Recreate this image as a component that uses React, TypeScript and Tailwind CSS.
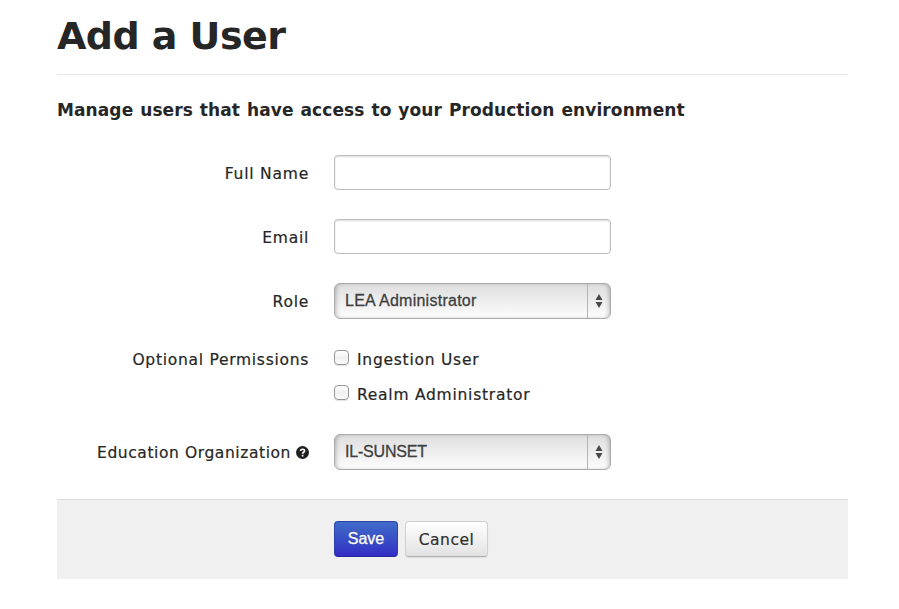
import type { ReactNode } from 'react';

const HELVETICA = "font-['Liberation_Sans',Arial,sans-serif]";

function Row({ label, className, labelClass, children }: { label: ReactNode; className: string; labelClass: string; children: ReactNode }) {
  return (
    <div className={`flex items-start ${className}`}>
      <div className={`flex w-[252px] shrink-0 items-center justify-end whitespace-nowrap leading-5 ${labelClass}`}>{label}</div>
      <div className="ml-[25px]">{children}</div>
    </div>
  );
}

function TextField({ name }: { name: string }) {
  return (
    <input
      aria-label={name}
      className="block h-[35px] w-[277px] rounded-[4px] border border-[#bdbdbd] bg-white px-2 shadow-[inset_0_1px_2px_rgba(0,0,0,0.14)] outline-none"
    />
  );
}

function SelectBox({ value, textClass }: { value: string; textClass: string }) {
  return (
    <button
      className={`flex h-9 w-[277px] overflow-hidden rounded-[6px] border border-[#aaaaaa] bg-linear-to-b from-[#dedede] to-[#fdfdfd] text-left text-[#3f3f3f] shadow-[inset_3px_0_4px_-2px_rgba(0,0,0,0.25),inset_-3px_0_4px_-2px_rgba(0,0,0,0.25)] ${HELVETICA}`}
    >
      <span className={`h-full flex-1 pl-[10px] text-base leading-[33px] [-webkit-text-stroke:0.3px_#3f3f3f] ${textClass}`}>{value}</span>
      <span className="flex h-full w-[23px] items-center justify-center border-l border-[#b5b5b5]">
        <svg width="8" height="14" viewBox="0 0 8 14" fill="#484848">
          <path d="M4 0 7.500 6H.500Z" />
          <path d="M.500 8h7L4 14Z" />
        </svg>
      </span>
    </button>
  );
}

function Check({ label }: { label: string }) {
  return (
    <label className="flex h-5 items-start whitespace-nowrap">
      <span className="mt-px h-[15px] w-[15px] shrink-0 rounded-[4px] border border-[#979797] bg-linear-to-b from-[#fefefe] via-[#f1f1f1] to-[#fafafa] shadow-[0_1px_1px_rgba(0,0,0,0.12)]" />
      <span className="mt-px ml-2 leading-5 tracking-[0.75px] [-webkit-text-stroke:0.2px_#262626]">{label}</span>
    </label>
  );
}

export default function App() {
  return (
    <main className="h-[609px] w-[899px] overflow-hidden bg-white pl-[57px] font-['DejaVu_Sans',Verdana,sans-serif] text-[15.5px] text-[#262626]">
      <div className="w-[791px]">
        <h1 className="flex h-[75px] items-start border-b border-[#e8e8e8] pt-[15px] text-[38px] leading-[42px] font-bold tracking-[-0.55px] whitespace-nowrap">Add a User</h1>
        <h2 className="mt-[25px] h-5 text-[17px] leading-5 font-bold tracking-[0.1px] [word-spacing:0.9px] whitespace-nowrap">Manage users that have access to your Production environment</h2>
        <form onSubmit={(e) => e.preventDefault()}>
          <Row label="Full Name" className="mt-[35px] h-16" labelClass="mt-[9px] tracking-[0.8px] [-webkit-text-stroke:0.2px_#262626]"><TextField name="Full Name" /></Row>
          <Row label="Email" className="h-16" labelClass="mt-[9px] tracking-[0.75px] [-webkit-text-stroke:0.2px_#262626]"><TextField name="Email" /></Row>
          <Row label="Role" className="h-[66px]" labelClass="mt-[9px] tracking-[0.75px] [-webkit-text-stroke:0.2px_#262626]"><SelectBox value="LEA Administrator" textClass="tracking-[0.26px]" /></Row>
          <Row label="Optional Permissions" className="h-[85px]" labelClass="mt-px tracking-[0.72px] [-webkit-text-stroke:0.2px_#262626]">
            <div className="flex flex-col gap-[15px]">
              <Check label="Ingestion User" />
              <Check label="Realm Administrator" />
            </div>
          </Row>
          <Row
            className="h-[65px]"
            labelClass="mt-[9px] tracking-[0.58px] [-webkit-text-stroke:0.2px_#262626]"
            label={
              <>
                <span>Education Organization</span>
                <svg className="-mt-[2px] ml-[5px]" width="13" height="13" viewBox="0 0 13 13">
                  <circle cx="6.500" cy="6.500" r="6.500" fill="#202020" />
                  <path d="M4.600 5.100C4.600 2.600 8.700 2.700 8.500 5c-.1 1.300-1.900 1.300-1.900 2.700M6.600 8.800v1.600" fill="none" stroke="#fff" strokeWidth="1.700" />
                </svg>
              </>
            }
          >
            <SelectBox value="IL-SUNSET" textClass="tracking-[-0.2px]" />
          </Row>
          <div className="flex h-20 items-start gap-[7px] border-t border-[#dddddd] bg-[#f0f0f0] pt-[21px] pl-[277px]">
            <button className={`h-9 w-16 rounded-[4px] border border-[#2d42a8] border-b-[#27279a] bg-linear-to-b from-[#416bc9] to-[#332bc4] pb-px text-base text-white [-webkit-text-stroke:0.3px_white] [text-shadow:0_-1px_0_rgba(0,0,0,0.25)] ${HELVETICA}`}>Save</button>
            <button className="h-9 w-[83px] rounded-[4px] border border-[#d0d0d0] border-b-[#b0b0b0] bg-linear-to-b from-white to-[#e2e2e2] pt-[3px] text-[15.5px] tracking-[0.5px] text-[#303030] shadow-[0_1px_1px_rgba(0,0,0,0.08)] [-webkit-text-stroke:0.2px_#303030]">Cancel</button>
          </div>
        </form>
      </div>
    </main>
  );
}
